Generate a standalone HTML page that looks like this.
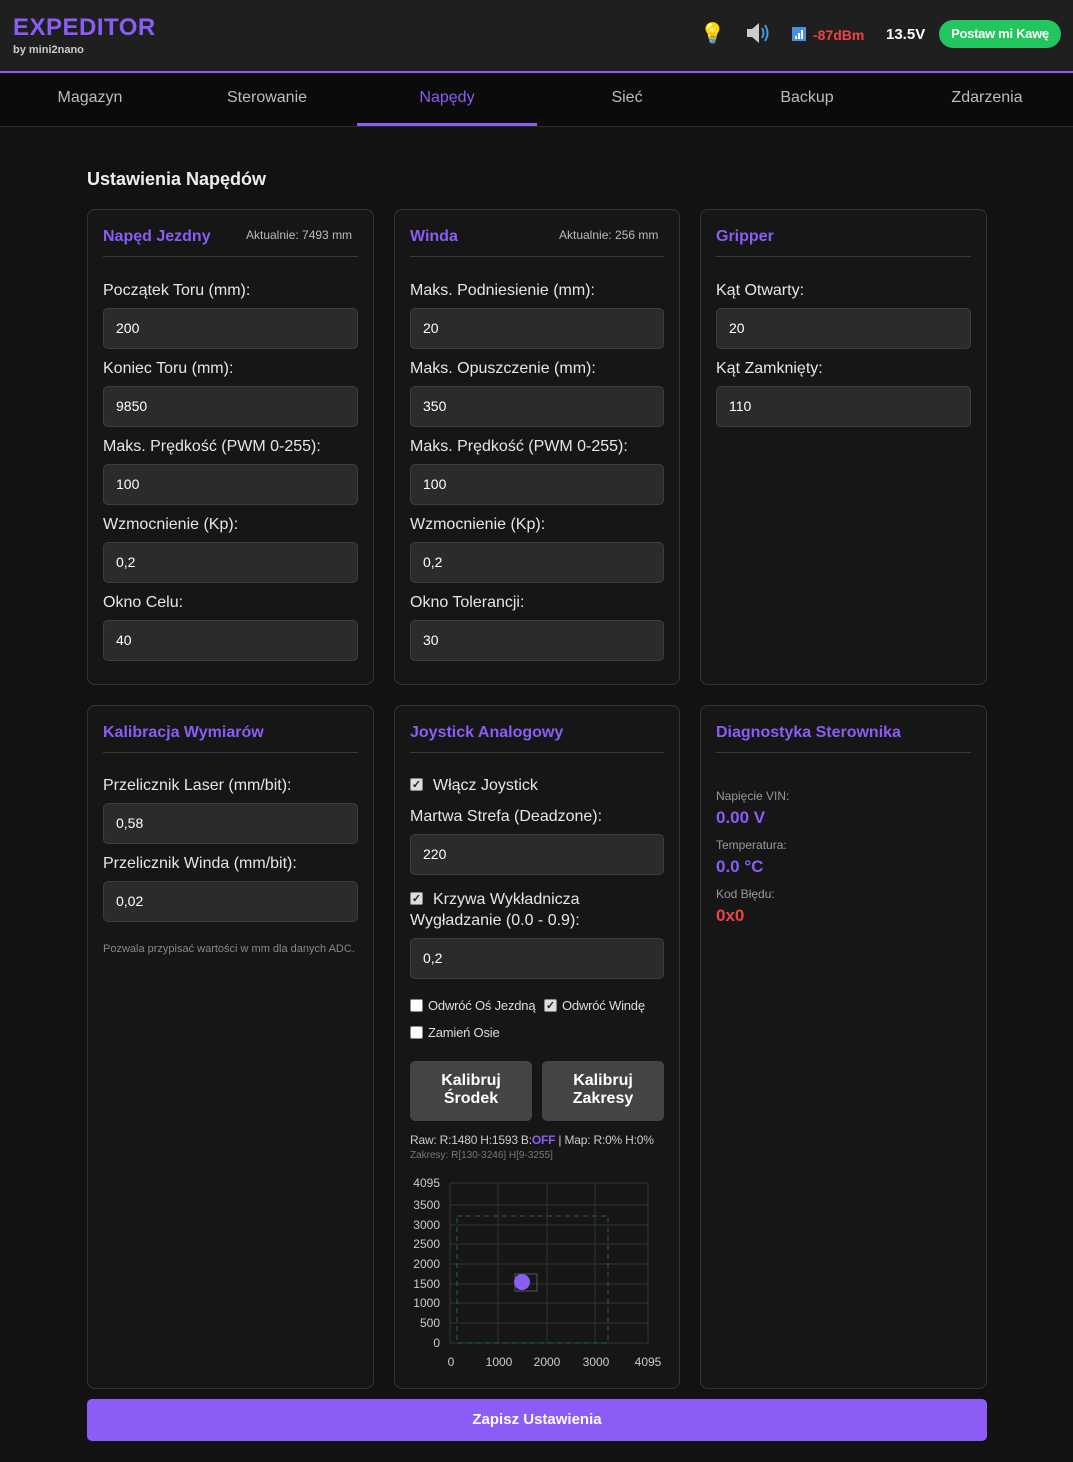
<!DOCTYPE html>
<html><head><meta charset="utf-8">
<style>
*{box-sizing:border-box;margin:0;padding:0}
body{width:1073px;height:1462px;background:#121212;font-family:"Liberation Sans",sans-serif;color:#e0e0e0;position:relative;overflow:hidden}
.a{position:absolute}
.hdr{left:0;top:0;width:1073px;height:73px;background:#1f1f1f;border-bottom:2px solid #8b5cf6}
.nav{left:0;top:75px;width:1073px;height:52px;background:#0b0b0b;border-bottom:1px solid #2a2a2a}
.nav div{position:absolute;top:0;width:180px;height:51px;line-height:46px;text-align:center;font-size:16px;color:#bdbdbd}
.card{background:#161616;border:1px solid #333;border-radius:8px}
.ct{font-size:16px;font-weight:bold;color:#8b5cf6}
.line{height:1px;background:#3a3a3a}
.lbl{font-size:16px;color:#e6e6e6}
.inp{width:255px;height:41px;background:#2b2b2b;border:1px solid #3d3d3d;border-radius:5px;font-size:14px;color:#fff;padding-left:12px;line-height:39px}
.sm{font-size:12px;color:#bbb}
.cb{width:13px;height:13px;border-radius:2px;background:#fff;border:1px solid #888}
.cbk{background:#ddd;color:#222;font-size:11px;line-height:12px;text-align:center;font-weight:bold}
.btn{background:#444;border-radius:5px;color:#fff;font-weight:bold;font-size:16px;text-align:center;line-height:18px;padding-top:11px}
</style></head><body>
<div class="a hdr"></div>
<div class="a" style="left:13px;top:14px;font-size:24px;font-weight:bold;color:#8b5cf6;letter-spacing:0.5px">EXPEDITOR</div>
<div class="a" style="left:13px;top:44px;font-size:11px;color:#ccc;font-weight:bold">by mini2nano</div>
<div class="a" style="left:700px;top:21px;font-size:20px">💡</div>
<svg class="a" style="left:745px;top:22px" width="26" height="22" viewBox="0 0 26 22"><path d="M2 7h5l7-6v20l-7-6H2z" fill="#ccc"/><path d="M17 6q3 5 0 10M20 3q5 8 0 16" stroke="#3b9be0" stroke-width="2" fill="none"/></svg>
<svg class="a" style="left:792px;top:27px" width="14" height="14"><rect width="14" height="14" fill="#4a90e2"/><rect x="3" y="9" width="2" height="3" fill="#fff"/><rect x="6" y="6" width="2" height="6" fill="#fff"/><rect x="9" y="3" width="2" height="9" fill="#fff"/></svg>
<div class="a" style="left:813px;top:27px;font-size:14px;font-weight:bold;color:#ef4444">-87dBm</div>
<div class="a" style="left:886px;top:26px;font-size:15px;font-weight:bold;color:#fff">13.5V</div>
<div class="a" style="left:939px;top:20px;width:122px;height:28px;background:#22c55e;border-radius:14px;color:#fff;font-size:13px;font-weight:bold;text-align:center;line-height:28px;letter-spacing:-0.3px">Postaw mi Kawę</div>
<div class="a nav">
<div style="left:0">Magazyn</div><div style="left:177px">Sterowanie</div><div style="left:357px;color:#8b5cf6;border-bottom:3px solid #8b5cf6">Napędy</div><div style="left:537px">Sieć</div><div style="left:717px">Backup</div><div style="left:897px">Zdarzenia</div>
</div>
<div class="a" style="left:87px;top:169px;font-size:18px;font-weight:bold;color:#eee">Ustawienia Napędów</div>

<div class="a card" style="left:87px;top:209px;width:287px;height:476px"></div>
<div class="a card" style="left:394px;top:209px;width:286px;height:476px"></div>
<div class="a card" style="left:700px;top:209px;width:287px;height:476px"></div>
<div class="a card" style="left:87px;top:705px;width:287px;height:684px"></div>
<div class="a card" style="left:394px;top:705px;width:286px;height:684px"></div>
<div class="a card" style="left:700px;top:705px;width:287px;height:684px"></div>

<div class="a ct" style="left:103px;top:228px">Napęd Jezdny</div>
<div class="a sm" style="left:246px;top:228px">Aktualnie: 7493 mm</div>
<div class="a line" style="left:103px;top:256px;width:255px"></div>
<div class="a lbl" style="left:103px;top:282px">Początek Toru (mm):</div><div class="a inp" style="left:103px;top:308px">200</div>
<div class="a lbl" style="left:103px;top:360px">Koniec Toru (mm):</div><div class="a inp" style="left:103px;top:386px">9850</div>
<div class="a lbl" style="left:103px;top:438px">Maks. Prędkość (PWM 0-255):</div><div class="a inp" style="left:103px;top:464px">100</div>
<div class="a lbl" style="left:103px;top:516px">Wzmocnienie (Kp):</div><div class="a inp" style="left:103px;top:542px">0,2</div>
<div class="a lbl" style="left:103px;top:594px">Okno Celu:</div><div class="a inp" style="left:103px;top:620px">40</div>

<div class="a ct" style="left:410px;top:228px">Winda</div>
<div class="a sm" style="left:559px;top:228px">Aktualnie: 256 mm</div>
<div class="a line" style="left:410px;top:256px;width:254px"></div>
<div class="a lbl" style="left:410px;top:282px">Maks. Podniesienie (mm):</div><div class="a inp" style="left:410px;top:308px;width:254px">20</div>
<div class="a lbl" style="left:410px;top:360px">Maks. Opuszczenie (mm):</div><div class="a inp" style="left:410px;top:386px;width:254px">350</div>
<div class="a lbl" style="left:410px;top:438px">Maks. Prędkość (PWM 0-255):</div><div class="a inp" style="left:410px;top:464px;width:254px">100</div>
<div class="a lbl" style="left:410px;top:516px">Wzmocnienie (Kp):</div><div class="a inp" style="left:410px;top:542px;width:254px">0,2</div>
<div class="a lbl" style="left:410px;top:594px">Okno Tolerancji:</div><div class="a inp" style="left:410px;top:620px;width:254px">30</div>

<div class="a ct" style="left:716px;top:228px">Gripper</div>
<div class="a line" style="left:716px;top:256px;width:255px"></div>
<div class="a lbl" style="left:716px;top:282px">Kąt Otwarty:</div><div class="a inp" style="left:716px;top:308px">20</div>
<div class="a lbl" style="left:716px;top:360px">Kąt Zamknięty:</div><div class="a inp" style="left:716px;top:386px">110</div>

<div class="a ct" style="left:103px;top:724px">Kalibracja Wymiarów</div>
<div class="a line" style="left:103px;top:752px;width:255px"></div>
<div class="a lbl" style="left:103px;top:777px">Przelicznik Laser (mm/bit):</div><div class="a inp" style="left:103px;top:803px">0,58</div>
<div class="a lbl" style="left:103px;top:855px">Przelicznik Winda (mm/bit):</div><div class="a inp" style="left:103px;top:881px">0,02</div>
<div class="a" style="left:103px;top:943px;font-size:11px;color:#888">Pozwala przypisać wartości w mm dla danych ADC.</div>

<div class="a ct" style="left:410px;top:724px">Joystick Analogowy</div>
<div class="a line" style="left:410px;top:752px;width:254px"></div>
<div class="a cb cbk" style="left:410px;top:778px">✓</div><div class="a lbl" style="left:433px;top:777px">Włącz Joystick</div>
<div class="a lbl" style="left:410px;top:808px">Martwa Strefa (Deadzone):</div><div class="a inp" style="left:410px;top:834px;width:254px">220</div>
<div class="a cb cbk" style="left:410px;top:892px">✓</div><div class="a lbl" style="left:433px;top:891px">Krzywa Wykładnicza</div>
<div class="a lbl" style="left:410px;top:912px">Wygładzanie (0.0 - 0.9):</div><div class="a inp" style="left:410px;top:938px;width:254px">0,2</div>
<div class="a cb" style="left:410px;top:999px"></div><div class="a" style="left:428px;top:998px;font-size:13px;color:#ddd;letter-spacing:-0.2px">Odwróć Oś Jezdną</div>
<div class="a cb cbk" style="left:544px;top:999px">✓</div><div class="a" style="left:562px;top:998px;font-size:13px;color:#ddd;letter-spacing:-0.2px">Odwróć Windę</div>
<div class="a cb" style="left:410px;top:1026px"></div><div class="a" style="left:428px;top:1025px;font-size:13px;color:#ddd;letter-spacing:-0.2px">Zamień Osie</div>
<div class="a btn" style="left:410px;top:1061px;width:122px;height:60px">Kalibruj<br>Środek</div>
<div class="a btn" style="left:542px;top:1061px;width:122px;height:60px">Kalibruj<br>Zakresy</div>
<div class="a" style="left:410px;top:1133px;font-size:12px;color:#ccc;letter-spacing:-0.2px">Raw: R:1480 H:1593 B:<b style="color:#8b5cf6">OFF</b> | Map: R:0% H:0%</div>
<div class="a" style="left:410px;top:1150px;font-size:10px;color:#777">Zakresy: R[130-3246] H[9-3255]</div>
<svg class="a" style="left:395px;top:1170px" width="285" height="205">
<g stroke="#333" stroke-width="1">
<line x1="55" y1="13" x2="55" y2="173"/><line x1="103" y1="13" x2="103" y2="173"/><line x1="152" y1="13" x2="152" y2="173"/><line x1="200" y1="13" x2="200" y2="173"/><line x1="253" y1="13" x2="253" y2="173"/>
<line x1="55" y1="13" x2="253" y2="13"/><line x1="55" y1="35" x2="253" y2="35"/><line x1="55" y1="55" x2="253" y2="55"/><line x1="55" y1="74" x2="253" y2="74"/><line x1="55" y1="94" x2="253" y2="94"/><line x1="55" y1="114" x2="253" y2="114"/><line x1="55" y1="133" x2="253" y2="133"/><line x1="55" y1="153" x2="253" y2="153"/><line x1="55" y1="173" x2="253" y2="173"/>
</g>
<rect x="62" y="46" width="151" height="127" fill="none" stroke="#1e6b35" stroke-dasharray="5,4"/>
<rect x="120" y="104" width="22" height="17" fill="none" stroke="#555"/>
<circle cx="127" cy="112" r="8" fill="#8b5cf6"/>
<g fill="#ccc" font-size="12" font-family="Liberation Sans" text-anchor="end">
<text x="45" y="17">4095</text><text x="45" y="39">3500</text><text x="45" y="59">3000</text><text x="45" y="78">2500</text><text x="45" y="98">2000</text><text x="45" y="118">1500</text><text x="45" y="137">1000</text><text x="45" y="157">500</text><text x="45" y="177">0</text>
</g>
<g fill="#ccc" font-size="12" font-family="Liberation Sans" text-anchor="middle">
<text x="56" y="196">0</text><text x="104" y="196">1000</text><text x="152" y="196">2000</text><text x="201" y="196">3000</text><text x="253" y="196">4095</text>
</g>
</svg>

<div class="a ct" style="left:716px;top:724px">Diagnostyka Sterownika</div>
<div class="a line" style="left:716px;top:752px;width:255px"></div>
<div class="a" style="left:716px;top:789px;font-size:12px;color:#999">Napięcie VIN:</div>
<div class="a" style="left:716px;top:808px;font-size:17px;font-weight:bold;color:#8b5cf6">0.00 V</div>
<div class="a" style="left:716px;top:838px;font-size:12px;color:#999">Temperatura:</div>
<div class="a" style="left:716px;top:857px;font-size:17px;font-weight:bold;color:#8b5cf6">0.0 °C</div>
<div class="a" style="left:716px;top:887px;font-size:12px;color:#999">Kod Błędu:</div>
<div class="a" style="left:716px;top:906px;font-size:17px;font-weight:bold;color:#ef4444">0x0</div>

<div class="a" style="left:87px;top:1399px;width:900px;height:42px;background:#8b5cf6;border-radius:5px;color:#fff;font-weight:bold;font-size:15px;text-align:center;line-height:42px">Zapisz Ustawienia</div>
</body></html>
